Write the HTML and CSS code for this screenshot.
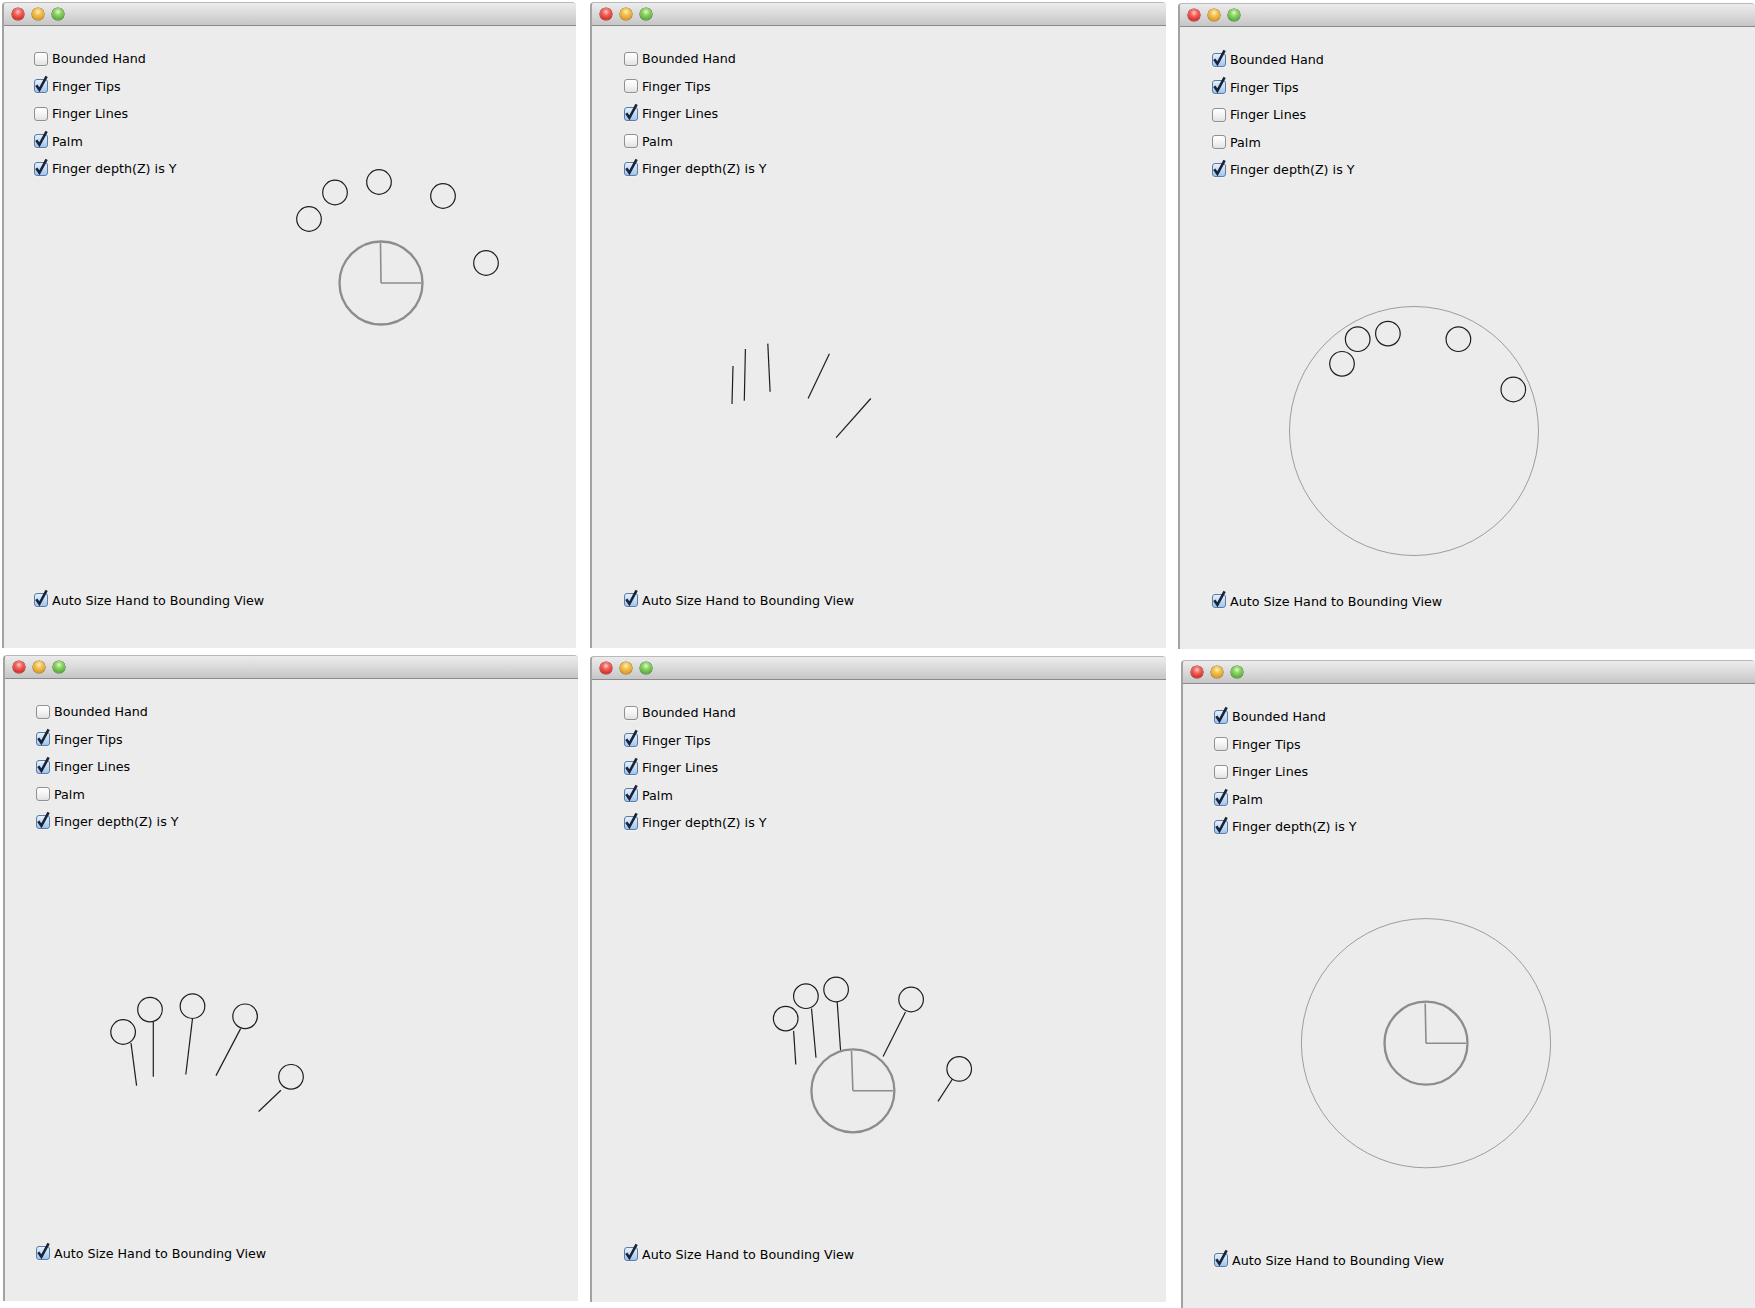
FILE: index.html
```html
<!DOCTYPE html>
<html>
<head>
<meta charset="utf-8">
<title>Hand views</title>
<link rel="stylesheet" href="styles.css">
</head>
<body>
<div class="desk">

  <!-- Window 1 -->
  <div class="win w1">
    <div class="titlebar"><span class="light red"></span><span class="light yellow"></span><span class="light green"></span></div>
    <div class="content">
      <div class="opt"><span class="cb"></span>Bounded Hand</div>
      <div class="opt"><span class="cb on"><svg viewBox="0 0 14 14"><path d="M2.3 6.3 L5.4 10.8 L12.6 -2.6"/></svg></span>Finger Tips</div>
      <div class="opt"><span class="cb"></span>Finger Lines</div>
      <div class="opt"><span class="cb on"><svg viewBox="0 0 14 14"><path d="M2.3 6.3 L5.4 10.8 L12.6 -2.6"/></svg></span>Palm</div>
      <div class="opt"><span class="cb on"><svg viewBox="0 0 14 14"><path d="M2.3 6.3 L5.4 10.8 L12.6 -2.6"/></svg></span>Finger depth(Z) is Y</div>
      <div class="opt last"><span class="cb on"><svg viewBox="0 0 14 14"><path d="M2.3 6.3 L5.4 10.8 L12.6 -2.6"/></svg></span>Auto Size Hand to Bounding View</div>
    </div>
    <svg class="canvas">
      <circle class="tip" cx="307" cy="217" r="12.3"/>
      <circle class="tip" cx="333" cy="190.5" r="12.3"/>
      <circle class="tip" cx="377" cy="180" r="12.3"/>
      <circle class="tip" cx="441" cy="194" r="12.3"/>
      <circle class="tip" cx="484" cy="261" r="12.3"/>
      <circle class="palm" cx="379" cy="281" r="41.5"/>
      <path class="hand" d="M379 281 L378.5 241 M379 281 L419 281"/>
    </svg>
  </div>

  <!-- Window 2 -->
  <div class="win w2">
    <div class="titlebar"><span class="light red"></span><span class="light yellow"></span><span class="light green"></span></div>
    <div class="content">
      <div class="opt"><span class="cb"></span>Bounded Hand</div>
      <div class="opt"><span class="cb"></span>Finger Tips</div>
      <div class="opt"><span class="cb on"><svg viewBox="0 0 14 14"><path d="M2.3 6.3 L5.4 10.8 L12.6 -2.6"/></svg></span>Finger Lines</div>
      <div class="opt"><span class="cb"></span>Palm</div>
      <div class="opt"><span class="cb on"><svg viewBox="0 0 14 14"><path d="M2.3 6.3 L5.4 10.8 L12.6 -2.6"/></svg></span>Finger depth(Z) is Y</div>
      <div class="opt last"><span class="cb on"><svg viewBox="0 0 14 14"><path d="M2.3 6.3 L5.4 10.8 L12.6 -2.6"/></svg></span>Auto Size Hand to Bounding View</div>
    </div>
    <svg class="canvas">
      <path class="fline" d="M143 364 L142 402"/>
      <path class="fline" d="M155.4 347 L154.3 398.7"/>
      <path class="fline" d="M177.8 341.6 L180.1 389.8"/>
      <path class="fline" d="M239.4 351.7 L218.1 396.5"/>
      <path class="fline" d="M280.8 396.5 L246.1 435.6"/>
    </svg>
  </div>

  <!-- Window 3 -->
  <div class="win w3">
    <div class="titlebar"><span class="light red"></span><span class="light yellow"></span><span class="light green"></span></div>
    <div class="content">
      <div class="opt"><span class="cb on"><svg viewBox="0 0 14 14"><path d="M2.3 6.3 L5.4 10.8 L12.6 -2.6"/></svg></span>Bounded Hand</div>
      <div class="opt"><span class="cb on"><svg viewBox="0 0 14 14"><path d="M2.3 6.3 L5.4 10.8 L12.6 -2.6"/></svg></span>Finger Tips</div>
      <div class="opt"><span class="cb"></span>Finger Lines</div>
      <div class="opt"><span class="cb"></span>Palm</div>
      <div class="opt"><span class="cb on"><svg viewBox="0 0 14 14"><path d="M2.3 6.3 L5.4 10.8 L12.6 -2.6"/></svg></span>Finger depth(Z) is Y</div>
      <div class="opt last"><span class="cb on"><svg viewBox="0 0 14 14"><path d="M2.3 6.3 L5.4 10.8 L12.6 -2.6"/></svg></span>Auto Size Hand to Bounding View</div>
    </div>
    <svg class="canvas">
      <circle class="bound" cx="236" cy="428" r="124.5"/>
      <circle class="tip" cx="179.7" cy="336.2" r="12.3"/>
      <circle class="tip" cx="209.9" cy="330.6" r="12.3"/>
      <circle class="tip" cx="164" cy="360.8" r="12.3"/>
      <circle class="tip" cx="280.4" cy="336.2" r="12.3"/>
      <circle class="tip" cx="335.3" cy="386.5" r="12.3"/>
    </svg>
  </div>

  <!-- Window 4 -->
  <div class="win w4">
    <div class="titlebar"><span class="light red"></span><span class="light yellow"></span><span class="light green"></span></div>
    <div class="content">
      <div class="opt"><span class="cb"></span>Bounded Hand</div>
      <div class="opt"><span class="cb on"><svg viewBox="0 0 14 14"><path d="M2.3 6.3 L5.4 10.8 L12.6 -2.6"/></svg></span>Finger Tips</div>
      <div class="opt"><span class="cb on"><svg viewBox="0 0 14 14"><path d="M2.3 6.3 L5.4 10.8 L12.6 -2.6"/></svg></span>Finger Lines</div>
      <div class="opt"><span class="cb"></span>Palm</div>
      <div class="opt"><span class="cb on"><svg viewBox="0 0 14 14"><path d="M2.3 6.3 L5.4 10.8 L12.6 -2.6"/></svg></span>Finger depth(Z) is Y</div>
      <div class="opt last"><span class="cb on"><svg viewBox="0 0 14 14"><path d="M2.3 6.3 L5.4 10.8 L12.6 -2.6"/></svg></span>Auto Size Hand to Bounding View</div>
    </div>
    <svg class="canvas">
      <circle class="tip" cx="120.1" cy="377" r="12.3"/>
      <circle class="tip" cx="147" cy="354.6" r="12.3"/>
      <circle class="tip" cx="189.5" cy="351.2" r="12.3"/>
      <circle class="tip" cx="242.1" cy="361.3" r="12.3"/>
      <circle class="tip" cx="288" cy="421.8" r="12.3"/>
      <path class="fline" d="M128 388.2 L133.6 430.7"/>
      <path class="fline" d="M150.3 366.9 L150.3 421.8"/>
      <path class="fline" d="M189.5 363.6 L182.8 419.5"/>
      <path class="fline" d="M237.6 373.6 L213 420.6"/>
      <path class="fline" d="M277.9 435.2 L255.6 456.5"/>
    </svg>
  </div>

  <!-- Window 5 -->
  <div class="win w5">
    <div class="titlebar"><span class="light red"></span><span class="light yellow"></span><span class="light green"></span></div>
    <div class="content">
      <div class="opt"><span class="cb"></span>Bounded Hand</div>
      <div class="opt"><span class="cb on"><svg viewBox="0 0 14 14"><path d="M2.3 6.3 L5.4 10.8 L12.6 -2.6"/></svg></span>Finger Tips</div>
      <div class="opt"><span class="cb on"><svg viewBox="0 0 14 14"><path d="M2.3 6.3 L5.4 10.8 L12.6 -2.6"/></svg></span>Finger Lines</div>
      <div class="opt"><span class="cb on"><svg viewBox="0 0 14 14"><path d="M2.3 6.3 L5.4 10.8 L12.6 -2.6"/></svg></span>Palm</div>
      <div class="opt"><span class="cb on"><svg viewBox="0 0 14 14"><path d="M2.3 6.3 L5.4 10.8 L12.6 -2.6"/></svg></span>Finger depth(Z) is Y</div>
      <div class="opt last"><span class="cb on"><svg viewBox="0 0 14 14"><path d="M2.3 6.3 L5.4 10.8 L12.6 -2.6"/></svg></span>Auto Size Hand to Bounding View</div>
    </div>
    <svg class="canvas">
      <circle class="tip" cx="195.7" cy="362.6" r="12.3"/>
      <circle class="tip" cx="215.9" cy="340.2" r="12.3"/>
      <circle class="tip" cx="246.1" cy="333.5" r="12.3"/>
      <circle class="tip" cx="321.1" cy="343.5" r="12.3"/>
      <circle class="tip" cx="369.2" cy="412.9" r="12.3"/>
      <path class="fline" d="M203.6 374.9 L205.8 408.5"/>
      <path class="fline" d="M221.5 352.5 L226 401.7"/>
      <path class="fline" d="M247.2 345.8 L250.6 395"/>
      <path class="fline" d="M315.5 355.9 L293.1 400.6"/>
      <path class="fline" d="M362.5 423 L348 445.4"/>
      <circle class="palm" cx="262.9" cy="434.8" r="41.5"/>
      <path class="hand" d="M262.9 434.8 L261.5 395 M262.9 434.8 L303 434.8"/>
    </svg>
  </div>

  <!-- Window 6 -->
  <div class="win w6">
    <div class="titlebar"><span class="light red"></span><span class="light yellow"></span><span class="light green"></span></div>
    <div class="content">
      <div class="opt"><span class="cb on"><svg viewBox="0 0 14 14"><path d="M2.3 6.3 L5.4 10.8 L12.6 -2.6"/></svg></span>Bounded Hand</div>
      <div class="opt"><span class="cb"></span>Finger Tips</div>
      <div class="opt"><span class="cb"></span>Finger Lines</div>
      <div class="opt"><span class="cb on"><svg viewBox="0 0 14 14"><path d="M2.3 6.3 L5.4 10.8 L12.6 -2.6"/></svg></span>Palm</div>
      <div class="opt"><span class="cb on"><svg viewBox="0 0 14 14"><path d="M2.3 6.3 L5.4 10.8 L12.6 -2.6"/></svg></span>Finger depth(Z) is Y</div>
      <div class="opt last"><span class="cb on"><svg viewBox="0 0 14 14"><path d="M2.3 6.3 L5.4 10.8 L12.6 -2.6"/></svg></span>Auto Size Hand to Bounding View</div>
    </div>
    <svg class="canvas">
      <circle class="bound" cx="245" cy="383.2" r="124.6"/>
      <circle class="palm" cx="245" cy="383.2" r="41.5"/>
      <path class="hand" d="M245 383.2 L244.2 343.5 M245 383.2 L285 383.2"/>
    </svg>
  </div>

</div>
</body>
</html>
```

FILE: styles.css
```css
* {
  box-sizing: border-box;
}

html, body {
  margin: 0;
  padding: 0;
  background: #ffffff;
}

body {
  font-family: "DejaVu Sans", "Noto Sans", sans-serif;
  color: #000;
}

.desk {
  width: 1755px;
  height: 1308px;
  overflow: hidden;
  display: grid;
  grid-template-columns: 576px 576px 577px;
  grid-template-rows: 646px 653px;
  column-gap: 12px;
  row-gap: 7px;
  padding: 2px 0 0 2px;
}

.win {
  position: relative;
  display: flex;
  flex-direction: column;
  background: #ececec;
  border-left: 2px solid #a2a2a2;
  border-top: 1px solid #b9b9b9;
  border-top-left-radius: 4px;
  border-top-right-radius: 4px;
  overflow: hidden;
}

.w1 { margin-right: 2px; }
.w3 { margin-top: 1px; height: 646px; }
.w4 { margin-left: 1px; height: 646px; }
.w5 { margin-top: 1px; height: 646px; }
.w6 { margin-left: 3px; margin-top: 5px; height: 648px; }

.titlebar {
  flex: none;
  height: 23px;
  display: flex;
  align-items: center;
  gap: 8px;
  padding-left: 8px;
  background: linear-gradient(#ececec 0%, #dcdcdc 45%, #c6c6c6 100%);
  border-bottom: 1px solid #8b8b8b;
}

.light {
  width: 12px;
  height: 12px;
  border-radius: 50%;
  flex: none;
}

.red {
  background: radial-gradient(circle at 50% 32%, #ffd0cc 0%, #f76a63 30%, #dc322b 70%, #a8211c 100%);
  box-shadow: 0 0 0 0.6px #8e2a25;
}

.yellow {
  background: radial-gradient(circle at 50% 32%, #fff1c2 0%, #f6c658 30%, #e0a027 70%, #b07816 100%);
  box-shadow: 0 0 0 0.6px #98701e;
}

.green {
  background: radial-gradient(circle at 50% 32%, #e2fbcf 0%, #93d86c 30%, #5eb23c 70%, #3f8a26 100%);
  box-shadow: 0 0 0 0.6px #3e7a28;
}

.content {
  flex: 1;
  display: flex;
  flex-direction: column;
  padding: 19px 0 34px 32px;
}

.w1 .content { padding-left: 30px; }
.w4 .content { padding-left: 31px; }
.w6 .content { padding-left: 31px; }

.opt {
  display: flex;
  align-items: center;
  gap: 4px;
  height: 27.5px;
  font-size: 12.7px;
  color: #000;
  white-space: nowrap;
}

.opt.last {
  margin-top: auto;
}

.cb {
  position: relative;
  flex: none;
  width: 14px;
  height: 14px;
  border: 1px solid #909090;
  border-radius: 3px;
  background: linear-gradient(#ffffff 0%, #f4f4f4 50%, #e2e2e2 100%);
  box-shadow: 0 0.5px 0 rgba(255, 255, 255, 0.6);
}

.cb.on {
  border-color: #5a7ba6;
  background: linear-gradient(#e6f1fd 0%, #c3dcf6 50%, #9fc6ef 100%);
}

.cb svg {
  position: absolute;
  left: -1px;
  top: -1px;
  width: 14px;
  height: 14px;
  overflow: visible;
}

.cb svg path {
  fill: none;
  stroke: #1b2336;
  stroke-width: 2.6;
  stroke-linecap: butt;
  stroke-linejoin: miter;
}

.canvas {
  position: absolute;
  left: -2px;
  top: -1px;
  width: 100%;
  height: 100%;
  overflow: visible;
  pointer-events: none;
}

.tip {
  fill: none;
  stroke: #1e1e1e;
  stroke-width: 1.2;
}

.fline {
  fill: none;
  stroke: #1e1e1e;
  stroke-width: 1.2;
}

.palm {
  fill: none;
  stroke: #8c8c8c;
  stroke-width: 2.3;
}

.hand {
  fill: none;
  stroke: #8c8c8c;
  stroke-width: 1.6;
}

.bound {
  fill: none;
  stroke: #9d9d9d;
  stroke-width: 1;
}
```
